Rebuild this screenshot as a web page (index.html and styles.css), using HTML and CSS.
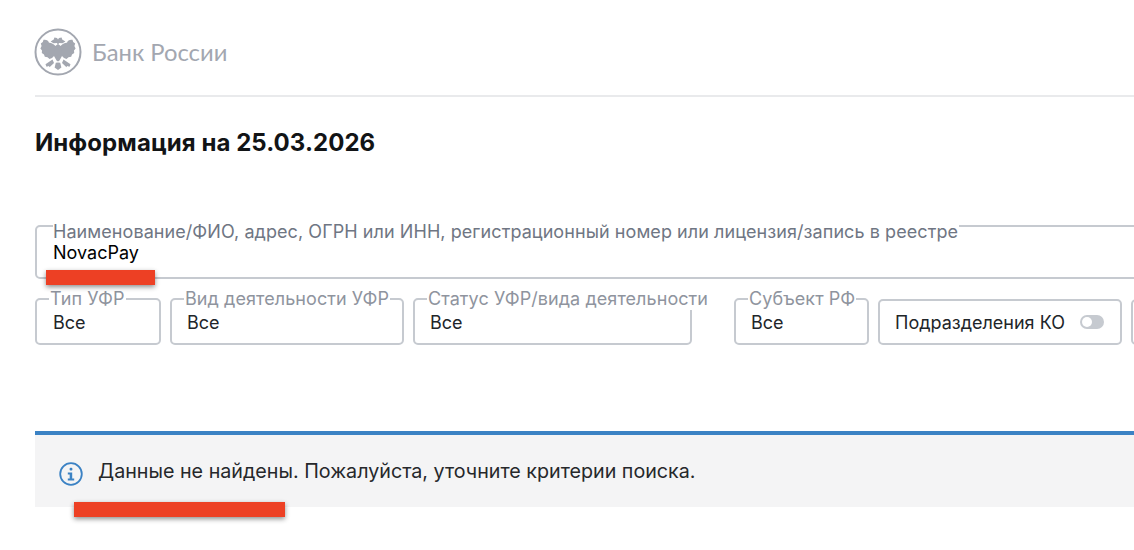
FILE: index.html
```html
<!DOCTYPE html>
<html lang="ru">
<head>
<meta charset="utf-8">
<title>Банк России</title>
<link rel="stylesheet" href="styles.css">
</head>
<body>
<div class="page">
  <header class="brand">
    <svg class="emblem" viewBox="0 0 48 48" aria-hidden="true">
      <circle cx="24" cy="24" r="22.500" fill="none" stroke="#a3a7b0" stroke-width="2"/>
      <g fill="#a3a7b0">
        <path d="M21 17.500C18.500 15.500 17 14.500 15 14.800C14.500 12.500 12 11.200 9.500 11.800L8.800 14L6.800 15.500L7.600 18L6.400 20.500L8 22.500L7.800 25L10 26.500L10.800 28.700L13.500 29.200L15.500 31L18 30L21 27Z"/>
        <path d="M24 16.500L22.800 15L19.500 15.200L16.600 13.600L19.800 11.600L20.400 9.500L23 10L24 11.500Z"/>
        <path d="M24 16L20.500 18.500L20 28L22.500 32.500L24 33.500Z"/>
        <path d="M24 34.500L21.800 34.800L20.600 39.500L24 42Z"/>
        <path d="M18.500 31.500L11.500 36.300L12.500 38.800L15 38L15.500 39.300L20 35Z"/>
      </g>
      <g fill="#a3a7b0" transform="translate(48 0) scale(-1 1)">
        <path d="M21 17.500C18.500 15.500 17 14.500 15 14.800C14.500 12.500 12 11.200 9.500 11.800L8.800 14L6.800 15.500L7.600 18L6.400 20.500L8 22.500L7.800 25L10 26.500L10.800 28.700L13.500 29.200L15.500 31L18 30L21 27Z"/>
        <path d="M24 16.500L22.800 15L19.500 15.200L16.600 13.600L19.800 11.600L20.400 9.500L23 10L24 11.500Z"/>
        <path d="M24 16L20.500 18.500L20 28L22.500 32.500L24 33.500Z"/>
        <path d="M24 34.500L21.800 34.800L20.600 39.500L24 42Z"/>
        <path d="M18.500 31.500L11.500 36.300L12.500 38.800L15 38L15.500 39.300L20 35Z"/>
      </g>
    </svg>
    <span class="brand-name">Банк России</span>
  </header>

  <h1 class="title">Информация на 25.03.2026</h1>

  <fieldset class="field field-main">
    <legend class="field-label field-label-main">Наименование/ФИО, адрес, ОГРН или ИНН, регистрационный номер или лицензия/запись в реестре</legend>
    <div class="field-value field-value-main">NovacPay</div>
  </fieldset>

  <div class="filters">
    <fieldset class="field field-type"><legend class="field-label">Тип УФР</legend><div class="field-value">Все</div></fieldset>
    <fieldset class="field field-kind"><legend class="field-label">Вид деятельности УФР</legend><div class="field-value">Все</div></fieldset>
    <fieldset class="field field-status"><legend class="field-label">Статус УФР/вида деятельности</legend><div class="field-value">Все</div></fieldset>
    <fieldset class="field field-region"><legend class="field-label">Субъект РФ</legend><div class="field-value">Все</div></fieldset>
    <div class="toggle-box">
      <span>Подразделения КО</span>
      <span class="toggle"><span class="toggle-knob"></span></span>
    </div>
    <div class="toggle-box toggle-box-cut"></div>
  </div>

  <div class="alert">
    <svg class="alert-icon" viewBox="0 0 24 24" aria-hidden="true">
      <circle cx="12" cy="12" r="10.800" fill="none" stroke="#3b82c4" stroke-width="1.800"/>
      <rect x="10.600" y="5.800" width="2.800" height="2.800" rx="1" fill="#3b82c4"/>
      <path d="M8.800 10.500h4.400v6h2v1.900H8.800v-1.900h1.900v-4.100H8.800z" fill="#3b82c4"/>
    </svg>
    <span>Данные не найдены. Пожалуйста, уточните критерии поиска.</span>
  </div>
</div>
<div class="redact redact-name"></div>
<div class="redact redact-alert"></div>
</body>
</html>
```

FILE: styles.css
```css
* { box-sizing: border-box; }
html, body { margin: 0; padding: 0; height: 100%; overflow: hidden; background: #fff; }
body { position: relative; font-family: Inter, "Liberation Sans", sans-serif; color: #212529; }
.page { padding: 28px 0 0 35px; width: 1134px; overflow: hidden; }

.brand { display: flex; align-items: flex-start; gap: 10px; height: 69px; border-bottom: 2px solid #e9eaec; }
.emblem { width: 48px; height: 48px; flex: none; margin-left: -1px; }
.brand-name { font-family: Lato, "Open Sans", sans-serif; font-size: 23.800px; line-height: 48px; color: #a3a7b0; }

.title { margin: 31px 0 0; font-size: 24px; line-height: 30px; font-weight: 700; color: #121416; letter-spacing: .07px; }

.field { margin: 0; padding: 0 0 0 15px; border: 2px solid #c6cad0; border-radius: 5px; min-width: 0; }
.field-label { padding: 0 1px; margin-left: -3px; font-size: 18px; line-height: 22px; letter-spacing: .07px; color: #8f949e; white-space: nowrap; }
.field-label-main { padding: 12px 1px 0 0; margin-left: 0; line-height: 20px; color: #6f7683; }
.field-value { font-size: 18px; line-height: 22px; padding-top: 2px; color: #212529; }

.field-main { margin-top: 52px; width: 1131px; height: 69px; padding-left: 16px; }
.field-value-main { padding-top: 0; color: #000; }

.filters { display: flex; margin-top: 9px; align-items: flex-end; gap: 9px; width: 1200px; }
.filters .field { height: 57px; }
.field-type { width: 126px; padding-left: 16px; }
.field-type .field-label { margin-left: -4px; }
.field-kind { width: 234px; }
.field-status { width: 279px; margin-right: 33px; }
.field-region { width: 135px; }
.toggle-box { display: flex; align-items: center; justify-content: space-between; width: 244px; height: 46px; padding: 0 16px 0 15px; border: 2px solid #c6cad0; border-radius: 5px; font-size: 18px; color: #212529; }
.toggle-box-cut { width: 60px; }
.toggle { display: block; width: 24px; height: 14px; border-radius: 7px; background: #c6cad0; padding: 2px; }
.toggle-knob { display: block; width: 10px; height: 10px; border-radius: 50%; background: #fff; }

.alert { display: flex; align-items: center; gap: 15px; margin-top: 86px; height: 76px; padding-left: 24px; background: #f4f4f5; border-top: 4px solid #3b82c4; font-size: 19.700px; color: #26282b; }
.alert-icon { width: 24px; height: 24px; flex: none; margin-top: 6px; }

.redact { position: absolute; background: #ed4024; box-shadow: 0 2px 5px rgba(0,0,0,.45); }
.redact-name { left: 46px; top: 270px; width: 109px; height: 15px; }
.redact-alert { left: 74px; top: 502px; width: 211px; height: 15px; }
```
